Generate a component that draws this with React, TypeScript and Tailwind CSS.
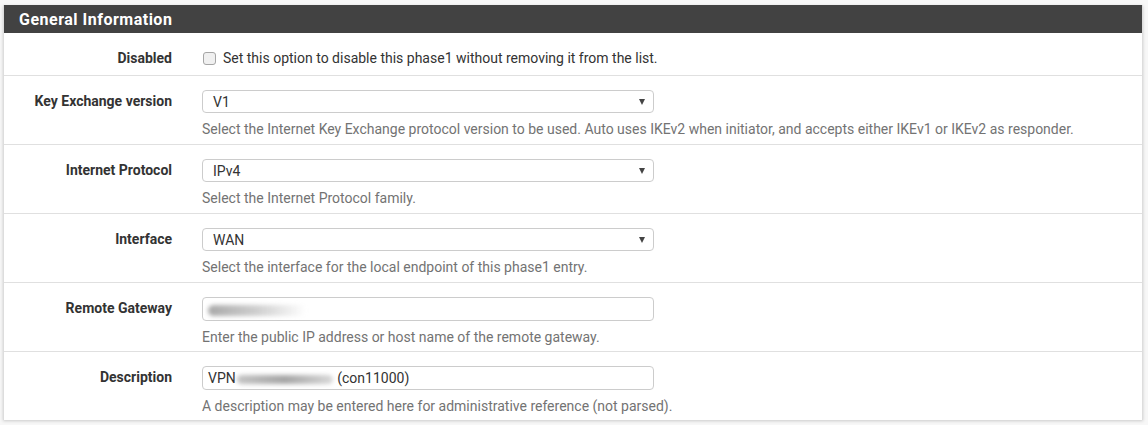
type Row = {
  label: string;
  kind: "select" | "text";
  value: React.ReactNode;
  help: string;
};

const rows: Row[] = [
  {
    label: "Key Exchange version",
    kind: "select",
    value: "V1",
    help: "Select the Internet Key Exchange protocol version to be used. Auto uses IKEv2 when initiator, and accepts either IKEv1 or IKEv2 as responder.",
  },
  {
    label: "Internet Protocol",
    kind: "select",
    value: "IPv4",
    help: "Select the Internet Protocol family.",
  },
  {
    label: "Interface",
    kind: "select",
    value: "WAN",
    help: "Select the interface for the local endpoint of this phase1 entry.",
  },
  {
    label: "Remote Gateway",
    kind: "text",
    value: (
      <span className="inline-block h-[11px] w-[98px] rounded-full bg-gradient-to-r from-[#a9a9a9] via-[#cfcfcf] to-transparent blur-[2px] align-middle" />
    ),
    help: "Enter the public IP address or host name of the remote gateway.",
  },
  {
    label: "Description",
    kind: "text",
    value: (
      <>
        VPN
        <span className="mx-[1px] inline-block h-[9px] w-[96px] rounded-full bg-gradient-to-r from-[#c4c4c4] via-[#a5a5a5] to-[#d8d8d8] blur-[2px] align-middle" />
        {" "}(con11000)
      </>
    ),
    help: "A description may be entered here for administrative reference (not parsed).",
  },
];

function Control({ row }: { row: Row }) {
  const isSelect = row.kind === "select";
  return (
    <div
      className={
        "flex w-[452px] items-center rounded-[4px] border border-[#cccccc] bg-white pr-[8px] text-[14px] text-[#333333] " +
        (isSelect ? "h-[23px] pl-[10px]" : "h-[24px] pl-[5px]")
      }
    >
      <span className="flex-1 whitespace-nowrap leading-none">{row.value}</span>
      {isSelect && (
        <span className="h-0 w-0 border-x-[3.5px] border-t-[6px] border-x-transparent border-t-[#444444]" />
      )}
    </div>
  );
}

export default function App() {
  return (
    <div className="h-[425px] w-[1148px] bg-[#f7f7f7] pl-[3px] pr-[5px] pt-[5px] font-['Roboto',sans-serif]">
      <div className="border-x border-[#dddddd] bg-white shadow-[0_1px_3px_rgba(0,0,0,0.18)]">
        {/* Heading */}
        <div className="flex h-[28px] items-center bg-[#424242] pl-[15px] pt-[1px] text-[16px] font-bold tracking-[0.5px] text-white">
          General Information
        </div>

        {/* Disabled */}
        <div className="flex border-b border-[#e0e0e0] pb-[7px] pt-[15px] leading-[20px]">
          <div className="w-[168px] text-right text-[14px] font-bold text-[#333333]">
            Disabled
          </div>
          <div className="flex items-center pl-[31px] text-[14px] text-[#333333]">
            <span className="mr-[7px] h-[13px] w-[13px] rounded-[3px] border border-[#a6a6a6] bg-[#f0f0f0]" />
            Set this option to disable this phase1 without removing it from the list.
          </div>
        </div>

        {/* Rows */}
        {rows.map((r, i) => (
          <div
            key={r.label}
            className={
              "flex pt-[14px] " +
              (i === rows.length - 1
                ? "pb-[4px]"
                : r.kind === "text"
                  ? "border-b border-[#e0e0e0] pb-[4px]"
                  : "border-b border-[#e0e0e0] pb-[5px]")
            }
          >
            <div className="w-[168px] pt-[1px] text-right text-[14px] font-bold leading-[20px] text-[#333333]">
              {r.label}
            </div>
            <div className="pl-[30px]">
              <Control row={r} />
              <p className="mt-[6px] text-[14px] leading-[20px] text-[#737373]">{r.help}</p>
            </div>
          </div>
        ))}
      </div>
    </div>
  );
}
